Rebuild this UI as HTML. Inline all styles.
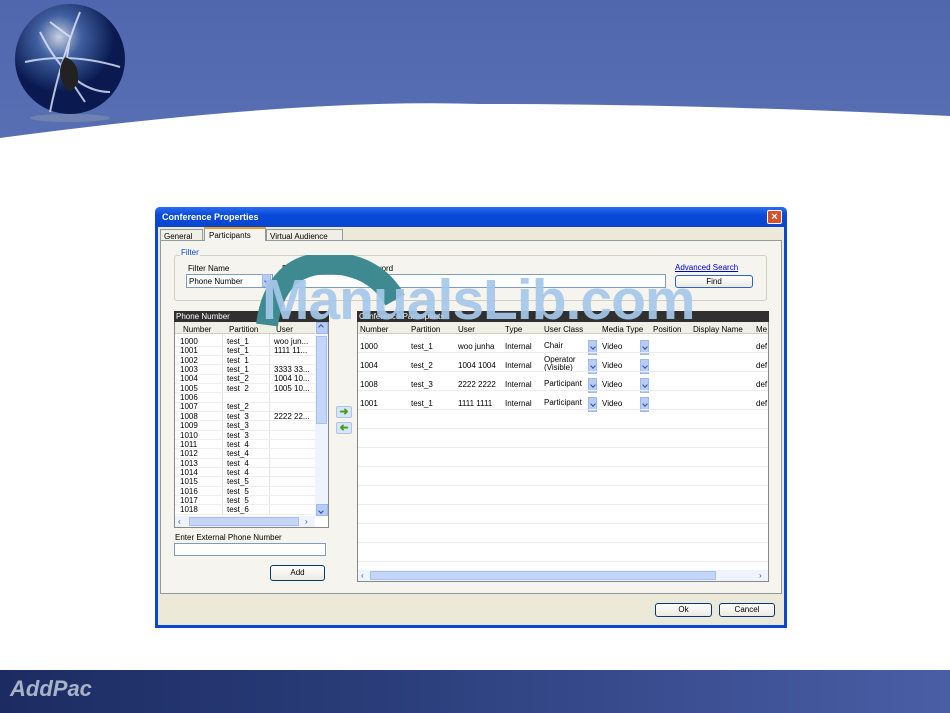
<!DOCTYPE html>
<html><head><meta charset="utf-8"><style>
*{margin:0;padding:0;box-sizing:border-box}
body{width:950px;height:713px;position:relative;overflow:hidden;background:#fff;font-family:"Liberation Sans",sans-serif;font-size:8px;color:#000}
.a{position:absolute}
.t{position:absolute;white-space:nowrap;font-size:8px;line-height:9px}
.btn{position:absolute;background:linear-gradient(#fff,#ece9e0);border:1px solid #003c74;border-radius:3px;text-align:center;font-size:8px;line-height:12px}
.dd{position:absolute;width:9px;height:13px;background:#b8cdf5;border:1px solid #a0b8e8}
.dd:after{content:"";position:absolute;left:2px;top:4px;width:3px;height:3px;border-right:1px solid #3050a0;border-bottom:1px solid #3050a0;transform:rotate(45deg)}
</style></head><body>
<div class="a" style="left:0;top:0;width:950px;height:150px;background:linear-gradient(#5066ae,#5a70b4)"></div>
<svg class="a" style="left:0;top:0" width="950" height="160"><path d="M0 138 Q300 98 480 104 Q700 104 950 116 L950 160 L0 160Z" fill="#fff"/></svg>
<svg class="a" style="left:10px;top:2px" width="122" height="120"><defs><radialGradient id="g" cx="40%" cy="30%"><stop offset="0" stop-color="#c8d0e0"/><stop offset="0.4" stop-color="#4060a0"/><stop offset="1" stop-color="#0a1a50"/></radialGradient></defs><ellipse cx="60" cy="116" rx="40" ry="4" fill="#8090b0" opacity=".6"/><circle cx="60" cy="57" r="55" fill="url(#g)"/><path d="M40 20 L60 35 L55 70 L75 100 M15 60 Q60 50 110 65 M30 30 Q60 90 100 90 M70 10 Q50 60 40 110" stroke="#e0e8ff" stroke-width="2" fill="none" opacity=".8"/><path d="M55 55 Q70 60 68 80 Q60 95 55 85 Q45 70 55 55Z" fill="#222"/></svg>
<div class="a" style="left:0;top:670px;width:950px;height:43px;background:linear-gradient(90deg,#1c2c62,#2a3d7a 40%,#4a5ea6)"></div>
<div class="a" style="left:10px;top:676px;font-size:22px;font-weight:bold;font-style:italic;color:#a8b2c8">AddPac</div>
<div class="a" style="left:155px;top:207px;width:632px;height:421px;background:#0a46d0;border-radius:5px 5px 0 0"></div>
<div class="a" style="left:155px;top:207px;width:632px;height:20px;background:linear-gradient(#2a6ef0,#0a4ad8 40%,#0846d0);border-radius:5px 5px 0 0"></div>
<div class="t" style="left:162px;top:213px;color:#fff;font-weight:bold;font-size:9px">Conference Properties</div>
<div class="a" style="left:767px;top:210px;width:15px;height:14px;background:#d8502a;border:1px solid #fff;border-radius:2px;color:#fff;font-size:11px;line-height:12px;text-align:center;font-weight:bold">×</div>
<div class="a" style="left:158px;top:227px;width:626px;height:398px;background:#ece9d8"></div>
<div class="a" style="left:160px;top:240px;width:622px;height:354px;border:1px solid #919b9c;background:#f5f4ee"></div>
<div class="a t" style="left:160px;top:229px;width:43px;height:12px;border:1px solid #919b9c;background:#f0efe6;padding:2px 3px">General</div>
<div class="a t" style="left:204px;top:227px;width:62px;height:14px;border:1px solid #919b9c;border-top:2px solid #e8a020;border-bottom:none;background:#f5f4ee;padding:2px 4px">Participants</div>
<div class="a t" style="left:266px;top:229px;width:77px;height:12px;border:1px solid #919b9c;background:#f0efe6;padding:2px 3px">Virtual Audience</div>
<div class="a" style="left:174px;top:255px;width:593px;height:46px;border:1px solid #d0d0bf;border-radius:3px"></div>
<div class="t" style="left:180px;top:248px;color:#0046d5;background:#f5f4ee;padding:0 1px">Filter</div>
<div class="t" style="left:188px;top:264px">Filter Name</div>
<div class="a" style="left:186px;top:274px;width:87px;height:14px;background:#fff;border:1px solid #7f9db9"></div>
<div class="t" style="left:189px;top:277px">Phone Number</div>
<div class="dd" style="left:262px;top:274px"></div>
<div class="t" style="left:282px;top:264px">Rule</div>
<div class="t" style="left:362px;top:264px">Keyword</div>
<div class="a" style="left:290px;top:274px;width:376px;height:14px;background:#fff;border:1px solid #7f9db9"></div>
<div class="t" style="left:675px;top:263px;color:#0000d0;text-decoration:underline">Advanced Search</div>
<div class="btn" style="left:675px;top:275px;width:78px;height:13px;border-color:#3060c0">Find</div>
<div class="a" style="left:174px;top:311px;width:155px;height:217px;border:1px solid #888;background:#fff"></div>
<div class="a t" style="left:174px;top:311px;width:155px;height:11px;background:#303030;color:#fff;padding:1px 2px">Phone Number</div>
<div class="a" style="left:175px;top:322px;width:140px;height:12px;background:#f0efe6;border-bottom:1px solid #d0d0c0"></div>
<div class="t" style="left:183px;top:325px">Number</div><div class="t" style="left:229px;top:325px">Partition</div><div class="t" style="left:276px;top:325px">User</div>
<div class="a" style="left:222px;top:334px;width:1px;height:180px;background:#e4e4e4"></div>
<div class="a" style="left:269px;top:334px;width:1px;height:180px;background:#e4e4e4"></div>
<div class="a" style="left:315px;top:322px;width:13px;height:194px;background:#eef3fd"></div>
<div class="a" style="left:316px;top:336px;width:11px;height:88px;background:#c4d6f8;border:1px solid #a8c0f0"></div>
<div class="dd" style="left:316px;top:322px;width:12px;height:12px;transform:scaleY(-1)"></div>
<div class="dd" style="left:316px;top:504px;width:12px;height:12px"></div>
<div class="a" style="left:175px;top:516px;width:140px;height:11px;background:#eef3fd"></div>
<div class="a" style="left:189px;top:517px;width:110px;height:9px;background:#c4d6f8;border:1px solid #a8c0f0"></div>
<div class="t" style="left:178px;top:517px;color:#3050a0">‹</div><div class="t" style="left:305px;top:517px;color:#3050a0">›</div>
<div id="lrows"></div>
<div class="t" style="left:175px;top:533px">Enter External Phone Number</div>
<div class="a" style="left:174px;top:543px;width:152px;height:13px;background:#fff;border:1px solid #7f9db9"></div>
<div class="btn" style="left:270px;top:565px;width:55px;height:16px;line-height:14px">Add</div>
<div class="a" style="left:336px;top:406px;width:16px;height:12px;background:#d8e4f8;border:1px solid #b0c4e8;border-radius:2px;color:#40a020;font-size:11px;line-height:10px;text-align:center;font-weight:bold">➜</div>
<div class="a" style="left:336px;top:422px;width:16px;height:12px;background:#d8e4f8;border:1px solid #b0c4e8;border-radius:2px;color:#40a020;font-size:11px;line-height:10px;text-align:center;font-weight:bold;transform:scaleX(-1)">➜</div>
<div class="a" style="left:357px;top:311px;width:412px;height:271px;border:1px solid #888;background:#fff"></div>
<div class="a t" style="left:357px;top:311px;width:412px;height:11px;background:#303030;color:#fff;padding:1px 2px">Conference Participants</div>
<div class="a" style="left:358px;top:322px;width:410px;height:12px;background:#f0efe6;border-bottom:1px solid #d0d0c0"></div>
<div class="t" style="left:360px;top:325px">Number</div><div class="t" style="left:411px;top:325px">Partition</div><div class="t" style="left:458px;top:325px">User</div><div class="t" style="left:505px;top:325px">Type</div><div class="t" style="left:544px;top:325px">User Class</div><div class="t" style="left:602px;top:325px">Media Type</div><div class="t" style="left:653px;top:325px">Position</div><div class="t" style="left:693px;top:325px">Display Name</div><div class="t" style="left:756px;top:325px">Me</div>
<div id="rrows"></div>
<div class="a" style="left:358px;top:570px;width:410px;height:11px;background:#eef3fd"></div>
<div class="a" style="left:370px;top:571px;width:346px;height:9px;background:#c4d6f8;border:1px solid #a8c0f0"></div>
<div class="t" style="left:361px;top:571px;color:#3050a0">‹</div><div class="t" style="left:759px;top:571px;color:#3050a0">›</div>
<div class="btn" style="left:655px;top:603px;width:57px;height:14px">Ok</div>
<div class="btn" style="left:719px;top:603px;width:56px;height:14px">Cancel</div>
<svg class="a" style="left:255px;top:255px" width="150" height="80"><path d="M12 70 Q20 8 75 8 Q120 10 140 45" stroke="#3e8a90" stroke-width="22" fill="none"/></svg>
<div class="a" style="left:262px;top:268px;font-size:57px;font-weight:bold;color:#a6c8ea;opacity:.92;line-height:64px;letter-spacing:-1px">ManualsLib.com</div>
<script>
var L=[["1000","test_1","woo jun..."],["1001","test_1","1111 11..."],["1002","test_1",""],["1003","test_1","3333 33..."],["1004","test_2","1004 10..."],["1005","test_2","1005 10..."],["1006","",""],["1007","test_2",""],["1008","test_3","2222 22..."],["1009","test_3",""],["1010","test_3",""],["1011","test_4",""],["1012","test_4",""],["1013","test_4",""],["1014","test_4",""],["1015","test_5",""],["1016","test_5",""],["1017","test_5",""],["1018","test_6",""]];
var h="";L.forEach(function(r,i){var y=337+i*9.35;h+='<div class="t" style="left:180px;top:'+y+'px">'+r[0]+'</div><div class="t" style="left:227px;top:'+y+'px">'+r[1]+'</div><div class="t" style="left:274px;top:'+y+'px">'+r[2]+'</div><div class="a" style="left:175px;top:'+(y+8.5)+'px;width:140px;height:1px;background:#eee"></div>';});
document.getElementById("lrows").innerHTML=h;
var R=[["1000","test_1","woo junha","Chair"],["1004","test_2","1004 1004","Operator<br>(Visible)"],["1008","test_3","2222 2222","Participant"],["1001","test_1","1111 1111","Participant"]];
h="";R.forEach(function(r,i){var y=338+i*19;var ty=r[3].indexOf("<br>")>0?y-1:y+4;h+='<div class="t" style="left:360px;top:'+(y+4)+'px">'+r[0]+'</div><div class="t" style="left:411px;top:'+(y+4)+'px">'+r[1]+'</div><div class="t" style="left:458px;top:'+(y+4)+'px">'+r[2]+'</div><div class="t" style="left:505px;top:'+(y+4)+'px">Internal</div><div class="t" style="left:544px;top:'+ty+'px;line-height:8px">'+r[3]+'</div><div class="dd" style="left:588px;top:'+(y+2)+'px;height:15px"></div><div class="t" style="left:602px;top:'+(y+4)+'px">Video</div><div class="dd" style="left:640px;top:'+(y+2)+'px;height:15px"></div><div class="t" style="left:756px;top:'+(y+4)+'px">def</div>';});
for(var i=0;i<13;i++){var y=352+i*19;h+='<div class="a" style="left:358px;top:'+y+'px;width:410px;height:1px;background:#ececec"></div>';}
document.getElementById("rrows").innerHTML=h;
</script>
</body></html>
